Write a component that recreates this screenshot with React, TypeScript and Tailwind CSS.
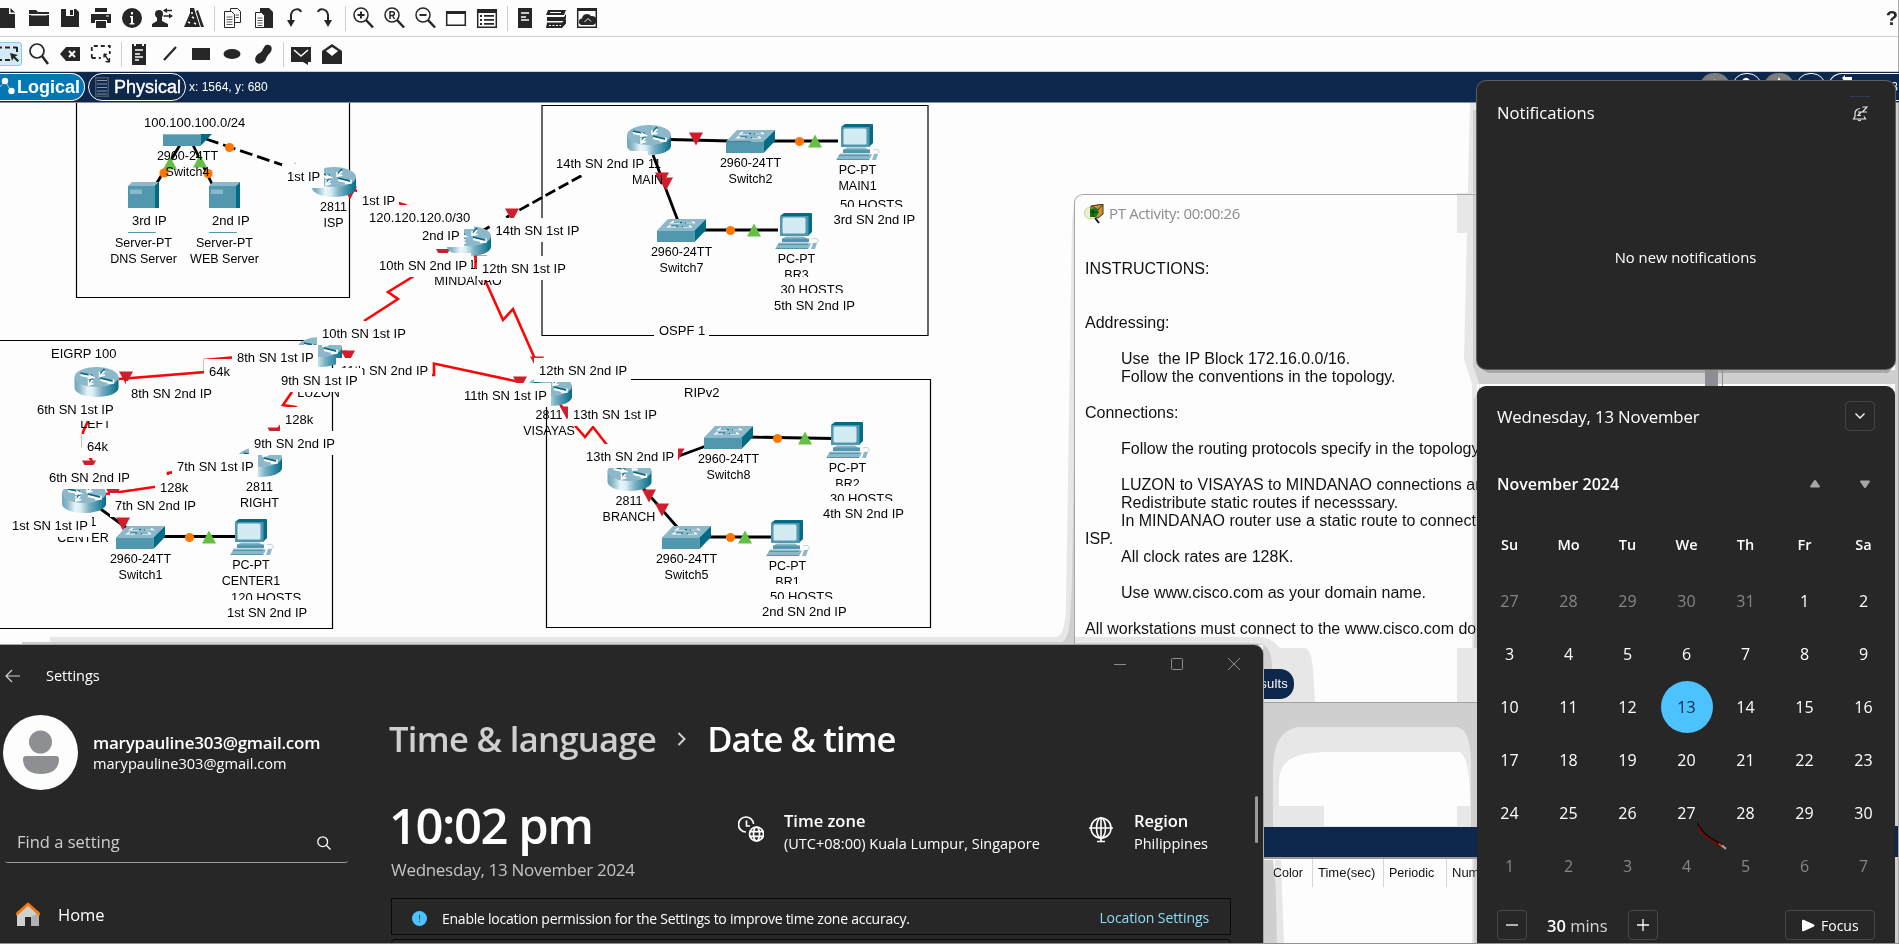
import type { ReactNode } from "react";

/* ---------- shared ---------- */

const UI = "font-['Open_Sans','Noto_Sans',sans-serif]";
const ARIAL = "font-['Liberation_Sans',Arial,sans-serif]";

function Glyph({ children }: { children: ReactNode }) {
  return (
    <span className="flex w-[31px] shrink-0 justify-center">
      <svg width="24" height="24" viewBox="0 0 24 24" fill="#262626" stroke="none">
        {children}
      </svg>
    </span>
  );
}

function Sep() {
  return (
    <span className="flex w-[7px] shrink-0 justify-end pr-px">
      <span className="h-[25px] w-px bg-[#cfcfcf]" />
    </span>
  );
}

const S = { fill: "none", stroke: "#262626" };

/* ---------- toolbars ---------- */

function MainToolbar() {
  return (
    <div className="flex h-[37px] items-center border-b border-[#cfcfcf]">
      <div className="-ml-2 flex flex-1 items-center">
        <Glyph>
          <path d="M4 2h9v6h6v14H4z" />
          <path d="M14.5 2l4.5 4.6h-4.5z" />
        </Glyph>
        <Glyph>
          <path d="M2 4h7l2 2h11v2H2z" />
          <path d="M2 9h20v11H2z" />
          <path d="M4 9h16" stroke="#fdfdfd" />
        </Glyph>
        <Glyph>
          <path d="M3 3h15l3 3v15H3z" />
          <path d="M8 3h8v7H8z" fill="#fdfdfd" />
          <path d="M12 4h3v5h-3z" />
        </Glyph>
        <Glyph>
          <path d="M6 2h12v4H6zM2 8h20v9h-4v-3H6v3H2zM7 15h10v7H7z" />
          <path d="M17 10h3" stroke="#fdfdfd" />
        </Glyph>
        <Glyph>
          <circle cx="12" cy="12" r="10" />
          <path d="M11 6h2v2.5h-2zM10 10h3v7h1.4v1.5H9.700V17H11v-5.500h-1z" fill="#fdfdfd" />
        </Glyph>
        <Glyph>
          <circle cx="8" cy="8" r="4" />
          <path d="M6 10h5v5l6 3v3H1v-3l5-3z" />
          <path d="M13 4.500h8M12.500 10h8" {...S} strokeWidth="1.500" />
          <path d="M16 2l-4 2.500L16 7zM18 7.500l4 2.500-4 2.500z" />
        </Glyph>
        <Glyph>
          <path d="M8 2h4l6 19H2L8 7z" />
          <path d="M14 5l2-1 6 17h-3z" />
          <path d="M10 11l2 1M6 16l2 1M12 17l2 1M9 7l2 0" stroke="#fdfdfd" strokeWidth="1.500" />
        </Glyph>
        <Sep />
        <Glyph>
          <path d="M10.500 2.500h7l3 3v11h-10z" {...S} />
          <path d="M4.500 5.500h7l3 3v13h-10z" fill="#fdfdfd" stroke="#262626" />
          <path d="M6.500 11h6M6.500 13.500h6M6.500 16h6M6.500 18.500h6M15.500 9h3.500M15.500 11.500h3.500" stroke="#555" />
        </Glyph>
        <Glyph>
          <path d="M9 2h9l4 4v16H9z" />
          <path d="M4.500 6.500h6l3 3v12h-9z" fill="#fdfdfd" stroke="#262626" />
          <path d="M6.500 12h5M6.500 14.500h5M6.500 17h5M6.500 19.500h5" stroke="#555" />
        </Glyph>
        <Glyph>
          <path d="M19 6c-1-4-9-4-10 3v6" {...S} strokeWidth="2" />
          <path d="M5 14h8l-4 7z" />
        </Glyph>
        <Glyph>
          <path d="M5 6c1-4 9-4 10 3v6" {...S} strokeWidth="2" />
          <path d="M11 14h8l-4 7z" />
        </Glyph>
        <Sep />
        <Glyph>
          <circle cx="10" cy="9" r="7" {...S} strokeWidth="1.500" />
          <path d="M15 14l7 7.500" {...S} strokeWidth="2.500" />
          <path d="M6.500 9h7M10 5.500v7" {...S} strokeWidth="2" />
        </Glyph>
        <Glyph>
          <circle cx="10" cy="9" r="7" {...S} strokeWidth="1.500" />
          <path d="M15 14l7 7.500" {...S} strokeWidth="2.500" />
          <path d="M8 13V5.700h2.500a1.900 1.900 0 010 3.800H8M10.500 9.500L12.500 13" {...S} strokeWidth="1.500" />
        </Glyph>
        <Glyph>
          <circle cx="10" cy="9" r="7" {...S} strokeWidth="1.500" />
          <path d="M15 14l7 7.500" {...S} strokeWidth="2.500" />
          <path d="M6.500 9h7" {...S} strokeWidth="2" />
        </Glyph>
        <Glyph>
          <path d="M2.700 5.700h18.600v13.600H2.700z" {...S} strokeWidth="1.500" />
          <path d="M2 5h20v3H2z" />
        </Glyph>
        <Glyph>
          <path d="M2.700 3.700h18.600v17.600H2.700z" {...S} strokeWidth="1.500" />
          <path d="M2 3h20v4H2zM5 9h2v2H5zM5 13h2v2H5zM5 17h2v2H5zM9 9h10v1.800H9zM9 13h10v1.800H9zM9 17h10v1.800H9z" />
        </Glyph>
        <Sep />
        <Glyph>
          <path d="M5 2h14v20H5z" />
          <path d="M8 7h8M8 11h5M8 14h8" stroke="#fdfdfd" strokeWidth="1.300" />
        </Glyph>
        <Glyph>
          <path d="M4 4h18l-2 5H2z" />
          <path d="M3 11h17l2-3v4l-2 3H3z" />
          <path d="M3 16.500h15l4-4v5l-4 4.500H2z" />
          <path d="M6 6.500h11" stroke="#fdfdfd" />
          <path d="M5 19.500h12" stroke="#fdfdfd" strokeDasharray="2 1.500" />
        </Glyph>
        <Glyph>
          <path d="M2.700 2.700h18.600v18.600H2.700z" {...S} strokeWidth="1.500" />
          <path d="M2 2h20v3H2z" />
          <path d="M6.500 19a3.300 3.300 0 01.5-6.500 5 5 0 019-2.500 4.500 4.500 0 012 9z" />
          <path d="M9.500 16l3.500-3.500 3 3" stroke="#fdfdfd" fill="none" />
        </Glyph>
      </div>
      <span className={`${ARIAL} pr-px text-[20px] leading-none font-bold text-[#262626]`}>?</span>
    </div>
  );
}

function DrawToolbar() {
  return (
    <div className="flex h-[35px] items-center border-b border-[#cfcfcf]">
      <div className="-ml-2 flex items-center">
        <span className="flex w-[31px] justify-center">
          <span className="flex h-[24px] w-[28px] shrink-0 items-center justify-center rounded-[3px] border border-[#8fc9ee] bg-[#d3ebf5]">
            <svg width="24" height="18" viewBox="0 0 24 18" fill="#262626">
              <path d="M1 2.500h20M1 15h13M21 2v6" fill="none" stroke="#262626" strokeWidth="2" strokeDasharray="5 3" />
              <path d="M14 8l8 2-3 1.500 4 4-1.500 1.500-4-4L16 16z" />
            </svg>
          </span>
        </span>
        <Glyph>
          <circle cx="10" cy="9" r="7" {...S} strokeWidth="1.700" />
          <path d="M15 14l6 8" {...S} strokeWidth="2.500" />
        </Glyph>
        <Glyph>
          <path d="M2 12l6-7h14v14H8z" />
          <path d="M11 9l6 6M17 9l-6 6" stroke="#fdfdfd" strokeWidth="2" />
        </Glyph>
        <Glyph>
          <path d="M2.800 16V4h18v8M2.800 16h9" {...S} strokeWidth="1.800" strokeDasharray="4 3" />
          <path d="M15 12l5 7M15 12v3.500M15 12l3 .7M20.500 20v-4M20.500 20l-4-.5" {...S} strokeWidth="1.300" />
        </Glyph>
        <Sep />
        <Glyph>
          <path d="M5 2h2v2h2V2h6v2h2V2h2v21H5z" />
          <path d="M8 8h8M8 12h5M8 15h8M8 18h4" stroke="#fdfdfd" strokeWidth="1.300" />
        </Glyph>
        <Glyph>
          <path d="M6 18L18 5" {...S} strokeWidth="2.200" />
        </Glyph>
        <Glyph>
          <path d="M3 6h18v12H3z" />
        </Glyph>
        <Glyph>
          <ellipse cx="12" cy="12" rx="8.500" ry="5" />
        </Glyph>
        <Glyph>
          <path d="M18 3c4 1 3 6 1 8s-3 3-4 6-6 6-9 4-2-7 1-9 3-1 5-5 3-5 6-4z" />
        </Glyph>
        <Sep />
        <Glyph>
          <path d="M2 5h20v15h-3v3l-5-3H2z" />
          <path d="M5 8l7 6 7-6" fill="none" stroke="#fdfdfd" strokeWidth="1.600" />
        </Glyph>
        <Glyph>
          <path d="M2 9l10-7 10 7v13H2z" />
          <path d="M6 9l6-4 6 4-6 5z" fill="#fdfdfd" />
        </Glyph>
      </div>
    </div>
  );
}

function RoundTool({ filled, children }: { filled?: boolean; children: ReactNode }) {
  return (
    <span
      className={
        filled
          ? "flex h-7 w-[30px] justify-center rounded-full bg-[#7d7d7d] pt-1"
          : "flex h-7 w-[30px] justify-center rounded-full border border-white pt-[3px]"
      }
    >
      <svg width="14" height="12" viewBox="0 0 14 12" fill="#fff">
        {children}
      </svg>
    </span>
  );
}

function NavBar() {
  return (
    <div className={`${ARIAL} flex h-[31px] items-center border-b-[1.500px] border-[#8c8f96] bg-[#0d274d] text-white`}>
      <div className="flex h-7 w-[85px] items-center rounded-r-[14px] border-y border-r border-white bg-[#0277b5]">
        <svg width="17" height="22" viewBox="0 0 17 22">
          <path d="M0 11L5 5l6 10" fill="none" stroke="#9fd0e8" strokeWidth="1" />
          <circle cx="5" cy="5" r="3.200" fill="#fff" />
          <circle cx="11.500" cy="15" r="3.200" fill="#fff" />
        </svg>
        <span className="text-[18px] leading-none font-bold">Logical</span>
      </div>
      <div className="ml-[3px] flex h-7 w-[98px] items-center rounded-[14px] border border-white pl-[6px]">
        <svg width="14" height="20" viewBox="0 0 14 20" fill="none" stroke="#8b95a6">
          <path d="M.5.500h13v19H.5z" stroke="#4b566b" strokeWidth="2" />
          <path d="M2 3.500h10M2 7h10M2 10.500h10M2 14h10M2 17h10" />
        </svg>
        <span className="ml-[5px] text-[18px] leading-none [-webkit-text-stroke:0.4px_white]">Physical</span>
      </div>
      <span className="ml-[3px] text-[12px]">x: 1564, y: 680</span>
      <div className="ml-auto flex items-center gap-[2px]">
        <RoundTool filled>
          <path d="M7 2L3 6l4 4z" />
        </RoundTool>
        <RoundTool>
          <path d="M2 6a4 4 0 018-2 3 3 0 012 6H2z" />
        </RoundTool>
        <RoundTool filled>
          <path d="M7 0l3 7H4z" />
        </RoundTool>
        <RoundTool>
          <path d="M2 9l6-5h3l-1 6z" />
        </RoundTool>
        <span className="flex h-7 w-[71px] justify-between rounded-l-[14px] border-y border-l border-white pr-px pl-3 text-[12px]">
          <svg width="12" height="10" viewBox="0 0 12 10" fill="#fff">
            <path d="M1 4l3-3v2h7v3H4v2z" />
          </svg>
          <span className="pt-1">3</span>
        </span>
      </div>
    </div>
  );
}

/* ---------- topology ---------- */

function Router({ x, y }: { x: number; y: number }) {
  return (
    <g transform={`translate(${x - 22} ${y - 15})`}>
      <path d="M0 10v11c0 5 10 9 22 9s22-4 22-9V10z" fill="url(#barrel)" />
      <ellipse cx="22" cy="10" rx="22" ry="10" fill="#8db8c9" />
      <g fill="none" strokeWidth="2">
        <path d="M6 7l12 2.500M26 8l4-5M26 12l12 3M18 12l-4 5" stroke="#0a6680" transform="translate(0 -.8)" />
        <path d="M6 8l12 2.500M26 9l4-5M26 13l12 3M18 13l-4 5" stroke="#fff" />
        <path d="M14 7.500l5 3-6 .8M25 5v4.200l5.500-1M39 12.500v3.700l-6 .3M14 13v5l5-1.500" stroke="#fff" strokeWidth="1.400" />
      </g>
    </g>
  );
}

function SwitchBox({ x, y }: { x: number; y: number }) {
  return (
    <g transform={`translate(${x} ${y})`}>
      <path d="M0 11.500L11 0h38L37.500 11.500z" fill="#8db8c9" />
      <path d="M0 11.500h37.500V23H0z" fill="#5197ae" />
      <path d="M37.500 11.500L49 0v11L37.500 23z" fill="#046b86" />
      <g fill="none" stroke="#0a6680" strokeWidth="1">
        <path d="M15 3.500h10M28 4h9M12 7h9M25 7.500h9" />
      </g>
      <g fill="none" stroke="#fff" strokeWidth="1.200">
        <path d="M17 2l-3 2h9M35 2.500l3 1.500h-9M14 6l-3 2h8M32 6.500l3 1.500h-9" />
      </g>
    </g>
  );
}

function Pc({ x, y }: { x: number; y: number }) {
  return (
    <g transform={`translate(${x} ${y})`}>
      <path d="M5 3l4-3h28l-3 3z" fill="#046b86" />
      <path d="M33 3l4-3v19l-4 4z" fill="#046b86" />
      <path d="M5 3h28.500v20H5z" fill="#5197ae" />
      <rect x="7.500" y="4.500" width="23" height="16" rx="1.500" fill="#d3ebf3" />
      <path d="M11 23.500h18l4 2.500H7z" fill="#8db8c9" />
      <path d="M7 25.500h27v3.500H7z" fill="#5197ae" />
      <path d="M4 29.500h29l3 1.500-3 5H0z" fill="#8db8c9" />
      <path d="M3 31.500h30M1 35.500h32" stroke="#5197ae" />
      <path d="M37 26c3-1 5-1 6 1s-2 4-4 3" fill="none" stroke="#b9d3dd" />
      <path d="M38 30h4l-2 6h-4z" fill="#8db8c9" />
    </g>
  );
}

function Server({ x, y }: { x: number; y: number }) {
  return (
    <g transform={`translate(${x} ${y})`}>
      <path d="M0 4l4-4h27l-4 4z" fill="#8db8c9" />
      <path d="M27 4l4-4v47l-4 4z" fill="#046b86" />
      <path d="M0 4h27v47H0z" fill="#5197ae" />
      <path d="M2 7.500h12v4.500H2z" fill="#8db8c9" />
    </g>
  );
}

const Down = ({ x, y }: { x: number; y: number }) => (
  <path d={`M${x - 7} ${y - 6.500}h14l-7 13z`} fill="#cf1f2e" />
);
const Up = ({ x, y }: { x: number; y: number }) => <path d={`M${x - 7} ${y + 6.500}h14l-7-13z`} fill="#66bf45" />;
const Dot = ({ x, y }: { x: number; y: number }) => <circle cx={x} cy={y} r="4.600" fill="#ff7700" />;

const zones: string[] = ["M76.500 90h273v207.500H76.500z", "M542 105.500h386v230H542z", "M-5 340.500h337.500V628.500H-5z", "M546.500 379.500h384v248h-384z"];

const copper: string[] = [
  "M180 145L155 186",
  "M193 145l20 41",
  "M649 139l102 2.500",
  "M653 155l25 66",
  "M770 141h68",
  "M700 230h78",
  "M98 507l30 22",
  "M160 536.500h75",
  "M668 460l38-14",
  "M643 488l35 40",
  "M705 537h66",
  "M748 437l85 1.500",
];

const serial: string[] = [
  "M354 190L405 205l60 30",
  "M414 276l-26 16 10 7-34 22",
  "M485 280l18 40 10-11 22 50",
  "M475.500 254v14",
  "M119 379l86-7v-12l32-3",
  "M88 421l-5 11v15l9 14",
  "M106 494l62-9v-12l30-4",
  "M292 392l-9 13 12 2-20 26",
  "M335 352h12",
  "M430 375h4v-11.500L522 382.500",
  "M560 404l12 18 13 15 8-10 14 18",
];

const downs: [number, number][] = [
  [350, 193], [443, 255.5], [480, 262], [512, 215], [696, 139], [662, 179], [666, 184], [537, 363], [126, 378],
  [89, 467], [113, 495], [123, 524], [274.5, 434], [348, 357], [520, 383], [567, 413], [677.5, 455], [649, 496], [662, 510],
];
const ups: [number, number][] = [
  [170, 163], [200, 161], [295, 169], [815, 141], [754, 230], [209, 537], [745, 537], [805, 438],
];
const dots: [number, number][] = [
  [229.5, 147.5], [164, 173], [208, 173.5], [799.5, 141.5], [730.5, 230.5], [189.5, 537.5], [730.5, 537.5], [777.5, 438.5],
];
const routers: [number, number][] = [
  [334, 182], [469, 241], [649, 140], [96.5, 382], [320, 352], [260, 462], [84, 498], [550, 391], [629.5, 476],
];
const switches: [number, number][] = [[163, 123], [726, 130], [657, 219], [116, 526], [704, 426], [662, 526]];
const pcs: [number, number][] = [[836, 124], [775, 213], [230, 519], [826, 422], [766, 520]];

/* centre x, centre y of first line, text lines */
const deviceNames: [number, number, string, string][] = [
  [188, 155.5, "2960-24TT", "Switch4"],
  [144, 242.5, "Server-PT", "DNS Server"],
  [225, 242.5, "Server-PT", "WEB Server"],
  [334, 206.5, "2811", "ISP"],
  [468.5, 265, "2811", "MINDANAO"],
  [648, 164, "2811", "MAIN"],
  [751, 162.5, "2960-24TT", "Switch2"],
  [858, 169.5, "PC-PT", "MAIN1"],
  [682, 251.5, "2960-24TT", "Switch7"],
  [797, 258.5, "PC-PT", "BR3"],
  [96, 408, "2811", "LEFT"],
  [319, 377, "2811", "LUZON"],
  [260, 486.5, "2811", "RIGHT"],
  [83.5, 522, "2811", "CENTER"],
  [141, 558.5, "2960-24TT", "Switch1"],
  [251.5, 564.5, "PC-PT", "CENTER1"],
  [549.5, 415, "2811", "VISAYAS"],
  [629.5, 500.5, "2811", "BRANCH"],
  [729, 458.5, "2960-24TT", "Switch8"],
  [848, 467.5, "PC-PT", "BR2"],
  [687, 558.5, "2960-24TT", "Switch5"],
  [788, 565.5, "PC-PT", "BR1"],
];

/* text left x, centre y, note */
const notes: [number, number, string][] = [
  [144, 122, "100.100.100.0/24"],
  [287, 176, "1st IP"],
  [362, 199.5, "1st IP"],
  [369, 217, "120.120.120.0/30"],
  [422, 235, "2nd IP"],
  [132, 220, "3rd IP"],
  [212, 220, "2nd IP"],
  [379, 264.5, "10th SN 2nd IP"],
  [482, 268, "12th SN 1st IP"],
  [495.5, 230, "14th SN 1st IP"],
  [556, 162.5, "14th SN 2nd IP"],
  [659, 330, "OSPF 1"],
  [840, 204, "50 HOSTS"],
  [833.5, 219, "3rd SN 2nd IP"],
  [780.5, 289, "30 HOSTS"],
  [774, 304.5, "5th SN 2nd IP"],
  [322, 333, "10th SN 1st IP"],
  [51, 353, "EIGRP 100"],
  [237, 357, "8th SN 1st IP"],
  [209, 371, "64k"],
  [131, 392.5, "8th SN 2nd IP"],
  [341, 369.5, "11th SN 2nd IP"],
  [281, 380, "9th SN 1st IP"],
  [37, 409, "6th SN 1st IP"],
  [285, 419, "128k"],
  [87, 446, "64k"],
  [254, 443, "9th SN 2nd IP"],
  [177, 466, "7th SN 1st IP"],
  [49, 477, "6th SN 2nd IP"],
  [160, 487, "128k"],
  [115, 505, "7th SN 2nd IP"],
  [12, 525, "1st SN 1st IP"],
  [231, 596.5, "120 HOSTS"],
  [227, 611.5, "1st SN 2nd IP"],
  [539, 370, "12th SN 2nd IP"],
  [464, 395, "11th SN 1st IP"],
  [684, 392, "RIPv2"],
  [573, 414, "13th SN 1st IP"],
  [586, 456, "13th SN 2nd IP"],
  [830, 498, "30 HOSTS"],
  [823, 512.5, "4th SN 2nd IP"],
  [770, 596, "50 HOSTS"],
  [762, 610.5, "2nd SN 2nd IP"],
];

function Topology() {
  return (
    <div className={`${ARIAL} relative flex-1 text-black`}>
      <div className="absolute inset-0 overflow-hidden">
        <div className="absolute -top-[103px] left-0 h-[944px] w-[1070px]">
          <svg className="absolute inset-0" width="1070" height="944" viewBox="0 0 1070 944">
            <defs>
              <linearGradient id="barrel">
                <stop offset="0" stopColor="#6fa7ba" />
                <stop offset=".12" stopColor="#8db8c9" />
                <stop offset=".3" stopColor="#e8f6fa" />
                <stop offset=".42" stopColor="#d9eef4" />
                <stop offset=".62" stopColor="#79b0c2" />
                <stop offset=".85" stopColor="#3288a2" />
                <stop offset="1" stopColor="#046b86" />
              </linearGradient>
            </defs>
            <g fill="none" stroke="#000" strokeWidth="1.200">
              {zones.map((d) => (
                <path key={d} d={d} />
              ))}
            </g>
            <g fill="none" stroke="#000" strokeWidth="2.800">
              {copper.map((d) => (
                <path key={d} d={d} />
              ))}
              <path d="M206 139l78 26.500" strokeDasharray="13 5" />
              <path d="M480 232l108-60" strokeDasharray="11 4" />
            </g>
            <g fill="none" stroke="#fb0505" strokeWidth="2.600">
              {serial.map((d) => (
                <path key={d} d={d} />
              ))}
            </g>
            {downs.map(([x, y]) => (
              <Down key={`${x}-${y}`} x={x} y={y} />
            ))}
            {routers.map(([x, y]) => (
              <Router key={`${x}`} x={x} y={y} />
            ))}
            {switches.map(([x, y]) => (
              <SwitchBox key={`${x}`} x={x} y={y} />
            ))}
            {pcs.map(([x, y]) => (
              <Pc key={`${x}`} x={x} y={y} />
            ))}
            <Server x={128} y={182} />
            <Server x={209} y={182} />
            {ups.map(([x, y]) => (
              <Up key={`${x}-${y}`} x={x} y={y} />
            ))}
            {dots.map(([x, y]) => (
              <Dot key={`${x}-${y}`} x={x} y={y} />
            ))}
          </svg>
          {deviceNames.map(([x, y, model, name]) => (
            <div
              key={`${x}-${y}`}
              className="absolute -translate-x-1/2 text-center text-[12.500px] leading-4 whitespace-nowrap"
              style={{ left: x - 0.5, top: y - 8 }}
            >
              <div>{model}</div>
              <div>{name}</div>
            </div>
          ))}
          {notes.map(([x, y, text]) => (
            <div
              key={`${x}-${y}`}
              className="absolute h-6 bg-[#fdfdfd] pr-1 pl-[5px] text-[13px] leading-[26px] whitespace-nowrap"
              style={{ left: x - 5, top: y - 12 }}
            >
              {text}
            </div>
          ))}
        </div>
      </div>
    </div>
  );
}

/* ---------- activity window ---------- */

function ActivityWindow() {
  const steps = [
    "Follow the routing protocols specify in the topology.",
    "",
    "LUZON to VISAYAS to MINDANAO connections are serial.",
    "Redistribute static routes if necesssary.",
    "In MINDANAO router use a static route to connect to",
  ];
  return (
    <div className="absolute top-[194px] left-[1074px] flex h-[509px] w-[760px] flex-col rounded-tl-[9px] border-t border-b border-l border-[#a6a6a6] bg-[#fdfdfd]">
      <div className="flex h-[37px] items-center pl-[9px]">
        <svg width="20" height="20" viewBox="0 0 20 20">
          <circle cx="6.500" cy="9" r="6" fill="#eef0c8" stroke="#c9cba8" />
          <path d="M7 2l12-2v10l-5 4-7-3z" fill="#c9923a" stroke="#4b3208" />
          <path d="M8 2l6 4 5-6" fill="none" stroke="#4b3208" />
          <path d="M6 5l6-1 3 4-3 5H6z" fill="#127a1d" />
          <path d="M6 8h8M9 5v8" stroke="#04380a" />
          <path d="M11 14l4 5" stroke="#111" strokeWidth="2" />
        </svg>
        <span className={`${UI} ml-[5px] text-[15px] tracking-[-0.350px] text-[#8c8c8c]`}>PT Activity: 00:00:26</span>
      </div>
      <div className={`${ARIAL} mt-7 pl-[10px] text-[16px] leading-[18px] whitespace-pre text-[#111]`}>
        <p>INSTRUCTIONS:</p>
        <p className="mt-9">Addressing:</p>
        <div className="mt-[18px] pl-9">
          <p>{"Use  the IP Block 172.16.0.0/16."}</p>
          <p>Follow the conventions in the topology.</p>
        </div>
        <p className="mt-[18px]">Connections:</p>
        <div className="mt-[18px] pl-9">
          {steps.map((line, i) => (
            <p key={i} className="h-[18px]">
              {line}
            </p>
          ))}
        </div>
        <p>ISP.</p>
        <div className="pl-9">
          <p>All clock rates are 128K.</p>
          <p className="mt-[18px]">Use www.cisco.com as your domain name.</p>
        </div>
        <p className="mt-[18px]">All workstations must connect to the www.cisco.com domain.</p>
      </div>
      <div className="mt-[31px] flex h-[30px] w-[219px] shrink-0 items-center justify-end rounded-r-[14px] bg-[#0d274d] pr-[6px]">
        <span className={`${ARIAL} text-[13px] tracking-[0.200px] text-white`}>Check Results</span>
      </div>
    </div>
  );
}

/* ---------- soft window edges ---------- */

function EdgeShading() {
  return (
    <>
      <svg className="absolute inset-0" width="1899" height="944" viewBox="0 0 1899 944">
        <path d="M1264 703h213v124h-213z" fill="#cfcfcf" />
        <path d="M1273 827v-60c1-25 8-35 24-40h160c12 3 14 20 14 40v60z" fill="#e7e7e7" />
        <path d="M1279 806v-22c0-20 9-31 45-32h135c8 3 11 20 11 54h-13v20h-133v-20z" fill="#fdfdfd" />
      </svg>
      <svg className="absolute inset-0 mix-blend-darken" width="1899" height="944" viewBox="0 0 1899 944">
        <path d="M50 645v-8h1005c9-1 10-15 11-30l6-385 2-20v443z" fill="#e7e7e7" />
        <path d="M22 645v-3h1040c8-3 8-20 10-60l2-120v183z" fill="#cfcfcf" />
        <path d="M1074 645v-8h185c11 0 15 5 21 11h26c6 5 7 12 9 54h-52v-57z" fill="#e7e7e7" />
        <path d="M1074 645v-2h182c12 1 16 8 16 26h-9v-24z" fill="#cfcfcf" />
        <path d="M1264 860h9l10 84h-19z" fill="#cfcfcf" />
        <path d="M1275 860h6l3 84h-7z" fill="#e7e7e7" />
        <path d="M1470 103h7v265h16v16h-16v560h-5V384l-8-25z" fill="#e7e7e7" />
        <path d="M1473 110h4v250l5 10h413v14h-415v3l-3 557h-3V400l6-14-7-20z" fill="#cfcfcf" />
        <path d="M1457 193h20v40h-20zM1457 648h20v54h-20z" fill="#e7e7e7" />
        <path d="M1473 195h4v38h-4z" fill="#cfcfcf" />
        <path d="M1480 368h412l-4 5h-400z" fill="#a8a8a8" />
        <path d="M1705 368h13v18h-13z" fill="#8d8e91" />
        <path d="M1722 368h1v18h-1z" fill="#8d8e91" />
        <path d="M1895 103h3v841h-3z" fill="#cfcfcf" />
        <path d="M1898 0h1v944h-1z" fill="#a9a9a9" />
        <path d="M1895 826h3v31h-3z" fill="#0d274d" />
        <path d="M1264 702h213v1h-213z" fill="#a0a0a0" />
      </svg>
    </>
  );
}

function EventList() {
  return (
    <div className={`${ARIAL} absolute top-[826px] left-[1264px] flex h-[118px] w-[213px] flex-col overflow-hidden`}>
      <div className="h-[33px] border-t border-b-2 border-[#a0a0a0] border-b-[#9b9b9b] bg-[#0d274d]" />
      <div className="flex h-[27px] items-center text-[13px] text-[#111]">
        <span className="w-[49px] shrink-0 border-r border-[#d6d6d6] pl-[9px] text-[12.500px] leading-[28px]">Color</span>
        <span className="w-[71px] shrink-0 border-r border-[#d6d6d6] pl-[5px] leading-[28px]">Time(sec)</span>
        <span className="w-[63px] shrink-0 border-r border-[#d6d6d6] pl-[5px] text-[12.500px] leading-[28px]">Periodic</span>
        <span className="shrink-0 pl-[5px] leading-[28px]">Num</span>
      </div>
    </div>
  );
}

/* ---------- settings ---------- */

function SettingsWindow() {
  return (
    <div
      className={`${UI} absolute top-[645px] left-0 flex h-[298px] w-[1263px] flex-col overflow-hidden rounded-tr-[9px] bg-[#272727] text-white shadow-[0_0_0_1px_#a6a6a6]`}
    >
      <header className="flex h-[62px] shrink-0 items-center pl-[5px]">
        <svg width="16" height="14" viewBox="0 0 16 14" fill="none" stroke="#cfcfcf" strokeWidth="1.200">
          <path d="M15 7H1M7 1L1 7l6 6" />
        </svg>
        <span className="ml-[25px] text-[14.500px]">Settings</span>
        <div className="mt-[13px] mr-[23px] ml-auto flex gap-[45px] self-start">
          <svg width="12" height="12" viewBox="0 0 12 12" stroke="#8d8d8d">
            <path d="M0 6.500h12" />
          </svg>
          <svg width="12" height="12" viewBox="0 0 12 12" fill="none" stroke="#8d8d8d">
            <rect x=".5" y=".5" width="11" height="11" rx="1" />
          </svg>
          <svg width="12" height="12" viewBox="0 0 12 12" stroke="#8d8d8d">
            <path d="M0 0l12 12M12 0L0 12" />
          </svg>
        </div>
      </header>
      <div className="flex">
        <aside className="flex w-[391px] shrink-0 flex-col pt-2 pl-[3px]">
          <div className="flex items-center">
            <svg width="75" height="75" viewBox="0 0 75 75">
              <circle cx="37.500" cy="37.500" r="37.500" fill="#fdfdfd" />
              <circle cx="37.500" cy="27" r="11.500" fill="#8d8f92" />
              <path d="M20 44q0-3 3-3h30q3 0 3 3c0 10-7 15-18 15s-18-5-18-15z" fill="#8d8f92" />
            </svg>
            <div className="ml-[15px] pt-px">
              <p className="text-[17px] leading-[21px] font-semibold tracking-[-0.240px]">marypauline303@gmail.com</p>
              <p className="text-[14.600px] leading-[21px]">marypauline303@gmail.com</p>
            </div>
          </div>
          <div className="mt-9 ml-[2px] flex h-[37px] w-[343px] items-center justify-between rounded-b-[3px] border-b-[1.500px] border-[#9a9a9a] pr-[17px] pb-[3px] pl-3">
            <span className="text-[16.500px] text-[#cfcfcf]">Find a setting</span>
            <svg width="14" height="14" viewBox="0 0 14 14" fill="none" stroke="#fff" strokeWidth="1.300">
              <circle cx="5.700" cy="5.700" r="4.900" />
              <path d="M9.300 9.300L13.500 13.500" />
            </svg>
          </div>
          <div className="mt-[39px] ml-[13px] flex h-6 items-center">
            <svg width="24" height="24" viewBox="0 0 24 24">
              <path d="M1 10L12 2l11 8v14h-8v-9H9v9H1z" fill="#d0d0d0" />
              <path d="M15 15l8-5v14h-8z" fill="#b0b0b0" />
              <path d="M1 12L12 2l11 10" fill="none" stroke="#f27a0b" strokeWidth="2.800" strokeLinecap="round" strokeLinejoin="round" />
            </svg>
            <span className="ml-[18px] pt-[2px] text-[16.500px]">Home</span>
          </div>
        </aside>
        <main className="flex w-[840px] shrink-0 flex-col">
          <h1 className="mt-[10px] -ml-[2px] flex h-11 items-center text-[34.500px] leading-[44px] font-semibold tracking-[-0.650px]">
            <span className="text-[#cfcfcf]">Time &amp; language</span>
            <svg className="mx-[21px]" width="9" height="14" viewBox="0 0 9 14" fill="none" stroke="#cfcfcf" strokeWidth="2">
              <path d="M1.500 1l6 6-6 6" />
            </svg>
            <span className="tracking-[-0.900px]">Date &amp; time</span>
          </h1>
          <div className="mt-[34px] flex">
            <div className="w-[347px] shrink-0">
              <p className="-ml-[2px] h-[60px] text-[49px] leading-[60px] font-semibold tracking-[-1.500px]">10:02 pm</p>
              <p className="mt-[3px] text-[17px] leading-6 tracking-[-0.300px] text-[#c4c4c4]">Wednesday, 13 November 2024</p>
            </div>
            <div className="flex w-[351px] shrink-0 pt-[14px]">
              <svg className="mt-[7px]" width="26" height="28" viewBox="0 0 26 28" fill="none" stroke="#fff" strokeWidth="1.700">
                <path d="M8 16a7.500 7.500 0 117.500-8M8.500 4.500V10h3.500" />
                <circle cx="18.500" cy="18" r="7" />
                <ellipse cx="18.500" cy="18" rx="3" ry="7" />
                <path d="M11.500 15.700h14M11.500 20.300h14" />
              </svg>
              <div className="ml-5">
                <p className="text-[16.500px] leading-[23px] font-semibold">Time zone</p>
                <p className="text-[14.500px] leading-[23px]">(UTC+08:00) Kuala Lumpur, Singapore</p>
              </div>
            </div>
            <div className="flex pt-[14px]">
              <svg className="mt-[7px]" width="24" height="28" viewBox="0 0 24 28" fill="none" stroke="#fff" strokeWidth="1.600">
                <circle cx="12" cy="12" r="10" />
                <ellipse cx="12" cy="12" rx="4.500" ry="10" />
                <path d="M0 12h24M12 1v24M8 25.500h8" />
              </svg>
              <div className="ml-[21px]">
                <p className="text-[16.500px] leading-[23px] font-semibold">Region</p>
                <p className="text-[14.500px] leading-[23px]">Philippines</p>
              </div>
            </div>
          </div>
          <div className="mt-4 flex h-[37px] items-center border border-[#090909] pt-1 pr-[21px] pl-5 text-[14px]">
            <span className="flex size-[15px] items-center justify-center rounded-full bg-[#4cc2ff] text-[9px] text-[#222]">!</span>
            <span className="ml-[15px] tracking-[-0.250px]">
              Enable location permission for the Settings to improve time zone accuracy.
            </span>
            <span className="ml-auto pb-[2px] tracking-[-0.100px] text-[#8fdcf5]">Location Settings</span>
          </div>
          <div className="mt-1 h-5 shrink-0 rounded-t-[4px] border border-[#090909]" />
        </main>
        <div className="mt-[89px] ml-6 h-[47px] w-[3px] shrink-0 rounded-full bg-[#9a9a9a]" />
      </div>
    </div>
  );
}

/* ---------- notification centre ---------- */

function Notifications() {
  return (
    <div
      className={`${UI} absolute top-[81px] left-[1477px] flex h-[288px] w-[418px] flex-col rounded-[9px] bg-[#272727] pt-[15px] pr-[25px] pl-5 text-white shadow-[0_0_0_1px_#5d5d5d]`}
    >
      <div className="flex h-[34px] items-center justify-between">
        <span className="text-[16.600px]">Notifications</span>
        <span className="flex h-full w-5 items-center justify-center border-t border-[#2f3a55]">
          <svg width="16" height="16" viewBox="0 0 16 16" fill="none" stroke="#e6e6e6" strokeWidth="1.200">
            <path d="M8 2.500a5 5 0 00-5 5v3L1.500 13h12L12 10.500" />
            <path d="M6 13.500q1.500 2.500 3 0M10.500 1H15l-4.500 5H15M6 6h3l-3 3.500h3" />
          </svg>
        </span>
      </div>
      <p className="mt-[116px] ml-1 text-center text-[14.800px]">No new notifications</p>
    </div>
  );
}

const weekdays = ["Su", "Mo", "Tu", "We", "Th", "Fr", "Sa"];
const days = Array.from({ length: 42 }, (_, i) => {
  const n = i - 4;
  if (n < 1) return { n: n + 31, dim: true };
  if (n > 30) return { n: n - 30, dim: true };
  return { n, dim: false };
});

function Calendar() {
  return (
    <div
      className={`${UI} absolute top-[386px] left-[1477px] flex h-[558px] w-[418px] flex-col overflow-hidden rounded-t-[9px] bg-[#272727] text-white`}
    >
      <div className="mt-[15px] flex h-[30px] shrink-0 items-center justify-between pr-5 pl-5">
        <span className="pt-[2px] text-[16.800px] tracking-[-0.150px]">Wednesday, 13 November</span>
        <span className="flex h-[30px] w-[30px] items-center justify-center rounded-[4px] border border-[#454545]">
          <svg width="10" height="6" viewBox="0 0 10 6" fill="none" stroke="#fff" strokeWidth="1.300">
            <path d="M.5.500L5 5 9.500.500" />
          </svg>
        </span>
      </div>
      <div className="mt-[38px] flex h-[30px] shrink-0 items-center pr-[25px] pl-5">
        <span className="text-[16px] font-semibold">November 2024</span>
        <svg className="ml-auto" width="10" height="8" viewBox="0 0 10 8" fill="#a6a6a6">
          <path d="M4 .5q1-1 2 0l4 6q0 1-1 1H1q-1 0-1-1z" />
        </svg>
        <svg className="ml-10" width="10" height="8" viewBox="0 0 10 8" fill="#a6a6a6">
          <path d="M4 7.500q1 1 2 0l4-6q0-1-1-1H1q-1 0-1 1z" />
        </svg>
      </div>
      <div className="mt-[31px] ml-[3px] grid w-[413px] shrink-0 grid-cols-7 text-center text-[14.500px] leading-[30px] font-semibold">
        {weekdays.map((d) => (
          <span key={d}>{d}</span>
        ))}
      </div>
      <div className="mt-[14px] ml-[3px] grid w-[413px] shrink-0 auto-rows-[53px] grid-cols-7 text-[16px]">
        {days.map(({ n, dim }, i) => (
          <span key={i} className="flex items-center justify-center">
            {n === 13 ? (
              <span className="flex size-[52px] items-center justify-center rounded-full bg-[#4cc2ff] text-[#0a2a4a]">13</span>
            ) : (
              <span className={dim ? "text-[#868686]" : "text-white"}>{n}</span>
            )}
          </span>
        ))}
      </div>
      <div className="mt-[18px] flex h-[30px] shrink-0 items-center pr-5 pl-5">
        <span className="flex h-[30px] w-[30px] items-center justify-center rounded-[4px] border border-[#45484c]">
          <svg width="12" height="12" viewBox="0 0 12 12" stroke="#fff" strokeWidth="1.300">
            <path d="M0 6h12" />
          </svg>
        </span>
        <span className="ml-5 w-[81px] pt-[3px] text-[16.500px] text-[#d6d6d6]">
          <b className="font-semibold text-white">30</b> mins
        </span>
        <span className="flex h-[30px] w-[30px] items-center justify-center rounded-[4px] border border-[#45484c]">
          <svg width="12" height="12" viewBox="0 0 12 12" stroke="#fff" strokeWidth="1.300">
            <path d="M0 6h12M6 0v12" />
          </svg>
        </span>
        <span className="ml-auto flex h-[30px] w-[90px] items-center rounded-[4px] border border-[#45484c] pl-4 text-[14px]">
          <svg width="13" height="13" viewBox="0 0 13 12" fill="#fff">
            <path d="M0 1q0-1 1.500-.8L12 5q1 1 0 2L1.500 11.800Q0 12 0 11z" />
          </svg>
          <span className="ml-[6px]">Focus</span>
        </span>
      </div>
    </div>
  );
}

function PenCursor() {
  return (
    <svg className="absolute top-[821px] left-[1696px]" width="32" height="30" viewBox="0 0 32 28" preserveAspectRatio="none" fill="none">
      <path d="M1 0c0 12 13 17 24 25l1-4C17 17 7 12 1 0z" fill="#140606" />
      <path d="M2 5c3 8 12 12 22 18" stroke="#7d0b06" strokeWidth="1.500" />
      <path d="M23 21l3 3" stroke="#b0411f" strokeWidth="2" />
      <path d="M26 23l4 3" stroke="#a6a6a6" strokeWidth="1.800" />
    </svg>
  );
}

export default function App() {
  return (
    <div className="relative h-[944px] w-[1899px] overflow-hidden bg-[#fdfdfd]">
      <div className="flex h-full flex-col">
        <MainToolbar />
        <DrawToolbar />
        <NavBar />
        <Topology />
      </div>
      <ActivityWindow />
      <EventList />
      <EdgeShading />
      <SettingsWindow />
      <Notifications />
      <Calendar />
      <PenCursor />
      <div className="absolute bottom-0 left-0 h-px w-full bg-[#8f8f8f]" />
    </div>
  );
}
